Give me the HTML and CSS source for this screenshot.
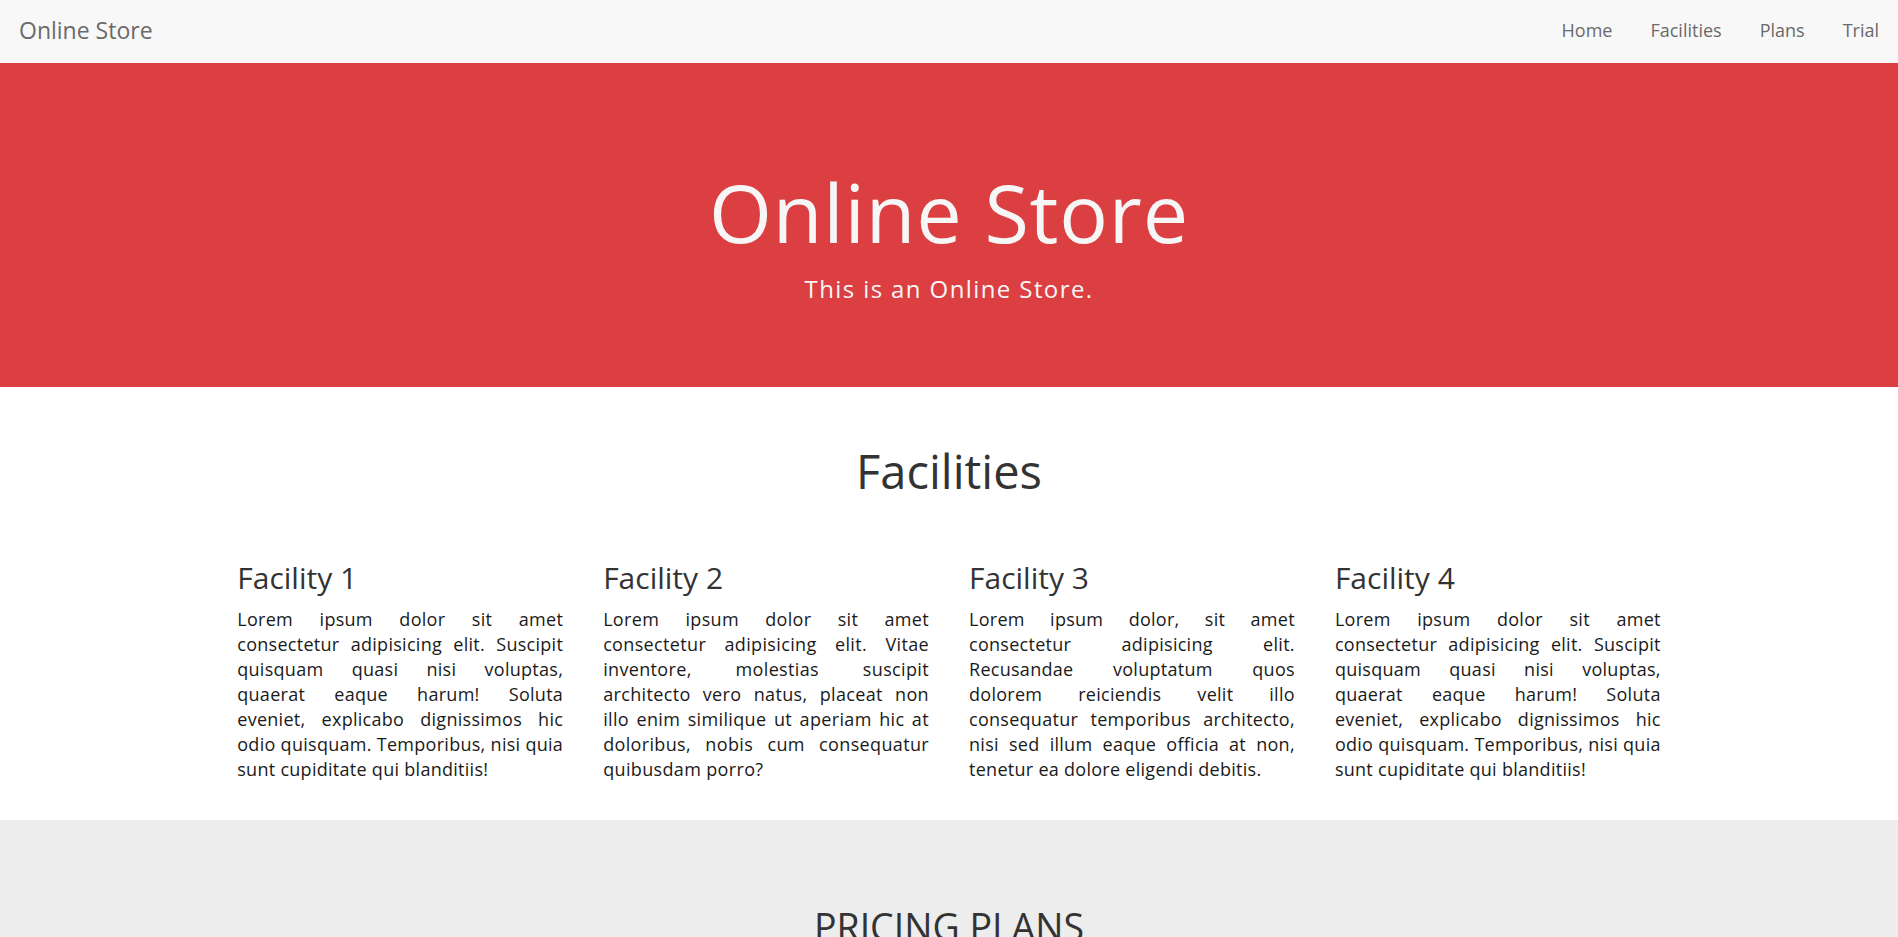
FILE: index.html
```html
<!DOCTYPE html>
<html lang="en">
<head>
<meta charset="utf-8">
<title>Online Store</title>
<link rel="stylesheet" href="styles.css">
</head>
<body>
<nav class="navbar">
  <a class="brand" href="#">Online Store</a>
  <ul class="nav-links">
    <li><a href="#">Home</a></li>
    <li><a href="#">Facilities</a></li>
    <li><a href="#">Plans</a></li>
    <li><a href="#">Trial</a></li>
  </ul>
</nav>
<header class="hero">
  <h1 class="hero-title">Online Store</h1>
  <p class="hero-lead">This is an Online Store.</p>
</header>
<section class="facilities">
  <h2 class="section-title">Facilities</h2>
  <div class="facility-grid">
    <div class="facility">
      <h3 class="facility-title">Facility 1</h3>
      <p class="facility-text">Lorem ipsum dolor sit amet consectetur adipisicing elit. Suscipit quisquam quasi nisi voluptas, quaerat eaque harum! Soluta eveniet, explicabo dignissimos hic odio quisquam. Temporibus, nisi quia sunt cupiditate qui blanditiis!</p>
    </div>
    <div class="facility">
      <h3 class="facility-title">Facility 2</h3>
      <p class="facility-text facility-text--loose">Lorem ipsum dolor sit amet consectetur adipisicing elit. Vitae inventore, molestias suscipit architecto vero natus, placeat non illo enim similique ut aperiam hic at doloribus, nobis cum consequatur quibusdam porro?</p>
    </div>
    <div class="facility">
      <h3 class="facility-title">Facility 3</h3>
      <p class="facility-text">Lorem ipsum dolor, sit amet consectetur adipisicing elit. Recusandae voluptatum quos dolorem reiciendis velit illo consequatur temporibus architecto, nisi sed illum eaque officia at non, tenetur ea dolore eligendi debitis.</p>
    </div>
    <div class="facility">
      <h3 class="facility-title">Facility 4</h3>
      <p class="facility-text">Lorem ipsum dolor sit amet consectetur adipisicing elit. Suscipit quisquam quasi nisi voluptas, quaerat eaque harum! Soluta eveniet, explicabo dignissimos hic odio quisquam. Temporibus, nisi quia sunt cupiditate qui blanditiis!</p>
    </div>
  </div>
</section>
<section class="pricing">
  <h2 class="section-title pricing-title">PRICING PLANS</h2>
</section>
</body>
</html>
```
FILE: styles.css
```css
* { box-sizing: border-box; }
html, body { margin: 0; padding: 0; }
body {
  font-family: "Open Sans", "DejaVu Sans", sans-serif;
  color: #222;
  background: #fff;
}
a { text-decoration: none; color: inherit; }

.navbar {
  height: 63px;
  background: #f8f8f8;
  display: flex;
  align-items: center;
  justify-content: space-between;
  padding: 0 0 0 19px;
}
.brand {
  font-size: 23px;
  color: #6a6a6a;
  line-height: 1;
  margin-top: -2px;
}
.nav-links {
  list-style: none;
  margin: 0;
  padding: 0;
  display: flex;
}
.nav-links a {
  display: block;
  font-size: 18px;
  line-height: 1;
  color: #6a6a6a;
  padding: 0 19px;
  margin-top: -3px;
}

.hero {
  background: #dc3f41;
  color: #f6f6f6;
  text-align: center;
  padding: 101px 0 80px;
}
.hero-title {
  margin: 0;
  font-size: 81px;
  font-weight: 400;
  line-height: 96px;
  letter-spacing: 0.8px;
}
.hero-lead {
  margin: 11px 0 0;
  font-size: 24px;
  line-height: 36px;
  letter-spacing: 1.4px;
}

.facilities {
  padding: 57px 0 38px;
  text-align: center;
}
.section-title {
  margin: 0;
  font-size: 47px;
  font-weight: 400;
  line-height: 54px;
  color: #333;
}
.facility-grid {
  width: 75%;
  margin: 62px auto 0;
  display: grid;
  grid-template-columns: repeat(4, 1fr);
  column-gap: 40px;
  text-align: left;
}
.facility-title {
  margin: 0;
  font-size: 30px;
  font-weight: 400;
  line-height: 36px;
  color: #333;
}
.facility-text {
  margin: 11px 0 0;
  font-size: 18px;
  line-height: 25px;
  letter-spacing: 0.28px;
  text-align: justify;
  color: #1a1a1a;
}
.facility-text--loose {
  letter-spacing: 0.35px;
}

.pricing {
  background: #ededed;
  padding: 80px 0 60px;
  text-align: center;
}
.pricing-title {
  font-size: 37.5px;
}
```
